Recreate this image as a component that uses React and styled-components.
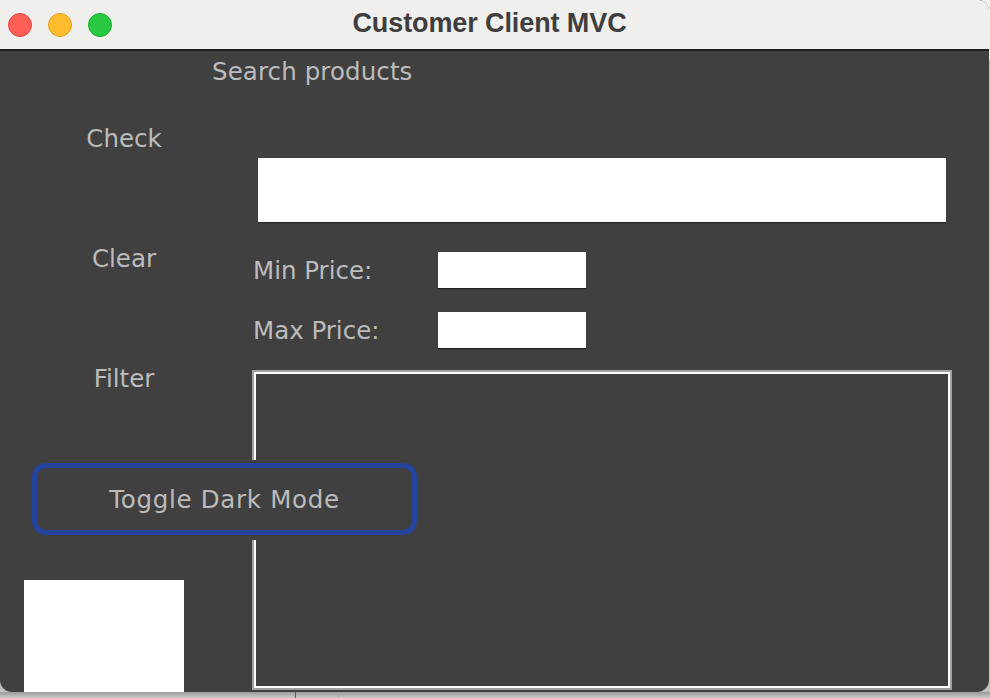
import React from "react";
import styled, { createGlobalStyle } from "styled-components";

const GlobalStyle = createGlobalStyle`
  html, body {
    margin: 0;
    padding: 0;
    background: linear-gradient(#f4f4f4 0, #f4f4f4 60px, #c2c2c2 60px);
  }
  body {
    width: 990px;
    height: 698px;
    overflow: hidden;
    font-family: "DejaVu Sans", "Liberation Sans", sans-serif;
  }
`;

const Window = styled.div`
  width: 989px;
  height: 692px;
  border-radius: 0 10px 12px 12px;
  overflow: hidden;
  display: flex;
  flex-direction: column;
  background: #404040;
`;

const TitleBar = styled.div`
  height: 49px;
  flex-shrink: 0;
  display: grid;
  grid-template-columns: 1fr auto 1fr;
  align-items: center;
  background: #efefed;
  border-bottom: 2px solid #1d1d1d;
`;

const Lights = styled.div`
  display: flex;
  gap: 16px;
  padding-left: 8px;
  padding-top: 1px;
`;

const Light = styled.span`
  width: 22px;
  height: 22px;
  border-radius: 50%;
  background: ${(p) => p.$color};
  border: 1px solid ${(p) => p.$edge};
`;

const Title = styled.h1`
  margin: 0 10px 3px 0;
  font-family: "Liberation Sans", Arial, sans-serif;
  font-weight: 700;
  font-size: 27px;
  color: #3e3e3e;
  letter-spacing: -0.1px;
`;

const Content = styled.div`
  flex: 1;
  display: grid;
  grid-template-columns: 252px 1fr;
  grid-template-rows: 41px 1fr;
  color: #bcbcbc;
  font-size: 24.5px;
`;

const Header = styled.div`
  grid-column: 1 / -1;
  padding-left: 212px;
  line-height: 41px;
  letter-spacing: 0.1px;
`;

const Sidebar = styled.div`
  display: flex;
  flex-direction: column;
  min-width: 0;
`;

const SideButton = styled.button`
  all: unset;
  height: 60px;
  width: 248px;
  display: flex;
  align-items: center;
  justify-content: center;
  margin-top: ${(p) => p.$top}px;
  font: inherit;
  color: inherit;
  cursor: pointer;
`;

const ToggleButton = styled.button`
  all: unset;
  position: relative;
  z-index: 1;
  box-sizing: border-box;
  margin: 52px 0 0 28px;
  width: 393px;
  height: 80px;
  flex-shrink: 0;
  padding: 3px 4px 5px;
  background: #404040;
  cursor: pointer;
`;

const Ring = styled.span`
  box-sizing: border-box;
  display: flex;
  align-items: center;
  justify-content: center;
  height: 100%;
  border: 5px solid #24449e;
  border-radius: 14px;
  font: inherit;
  color: #bcbcbc;
  font-size: 24.5px;
  letter-spacing: 0.7px;
  padding-top: 1px;
`;

const Swatch = styled.div`
  margin: 40px 0 0 24px;
  width: 160px;
  flex: 1;
  background: #ffffff;
`;

const Main = styled.div`
  display: flex;
  flex-direction: column;
  min-width: 0;
`;

const SearchInput = styled.input`
  box-sizing: border-box;
  margin: 66px 0 0 6px;
  width: 688px;
  height: 64px;
  border: none;
  outline: none;
  background: #ffffff;
  box-shadow: 0 1px 1px rgba(0, 0, 0, 0.45);
`;

const PriceRow = styled.div`
  display: flex;
  align-items: center;
  height: 36px;
  margin-top: ${(p) => p.$top}px;
`;

const PriceLabel = styled.label`
  width: 186px;
  padding-left: 1px;
  box-sizing: border-box;
`;

const PriceInput = styled.input`
  box-sizing: border-box;
  width: 148px;
  height: 36px;
  border: none;
  outline: none;
  background: #ffffff;
  box-shadow: 0 1px 1px rgba(0, 0, 0, 0.45);
`;

const Results = styled.textarea`
  box-sizing: border-box;
  margin-top: 22px;
  width: 700px;
  height: 320px;
  border: 2px solid #a2a2a2;
  box-shadow: inset 0 0 0 2px #ffffff;
  background: #404040;
  color: #bcbcbc;
  resize: none;
  outline: none;
`;

const Desktop = styled.div`
  display: flex;
  height: 6px;
  background: linear-gradient(#9c9c9c, #c9c9c9);
`;

const DeskCell = styled.div`
  width: ${(p) => p.$w}px;
  border-right: 1px solid ${(p) => p.$line};
`;

export default function App() {
  return (
    <>
      <GlobalStyle />
      <Window>
        <TitleBar>
          <Lights>
            <Light $color="#ff5f57" $edge="#e2463f" />
            <Light $color="#febc2e" $edge="#e1a020" />
            <Light $color="#28c840" $edge="#1aab2d" />
          </Lights>
          <Title>Customer Client MVC</Title>
          <div />
        </TitleBar>
        <Content>
          <Header>Search products</Header>
          <Sidebar>
            <SideButton $top={16}>Check</SideButton>
            <SideButton $top={60}>Clear</SideButton>
            <SideButton $top={60}>Filter</SideButton>
            <ToggleButton>
              <Ring>Toggle Dark Mode</Ring>
            </ToggleButton>
            <Swatch />
          </Sidebar>
          <Main>
            <SearchInput />
            <PriceRow $top={30}>
              <PriceLabel>Min Price:</PriceLabel>
              <PriceInput />
            </PriceRow>
            <PriceRow $top={24}>
              <PriceLabel>Max Price:</PriceLabel>
              <PriceInput />
            </PriceRow>
            <Results />
          </Main>
        </Content>
      </Window>
      <Desktop>
        <DeskCell $w={295} $line="#5a5a5a" />
        <DeskCell $w={42} $line="#a8a8a8" />
      </Desktop>
    </>
  );
}
